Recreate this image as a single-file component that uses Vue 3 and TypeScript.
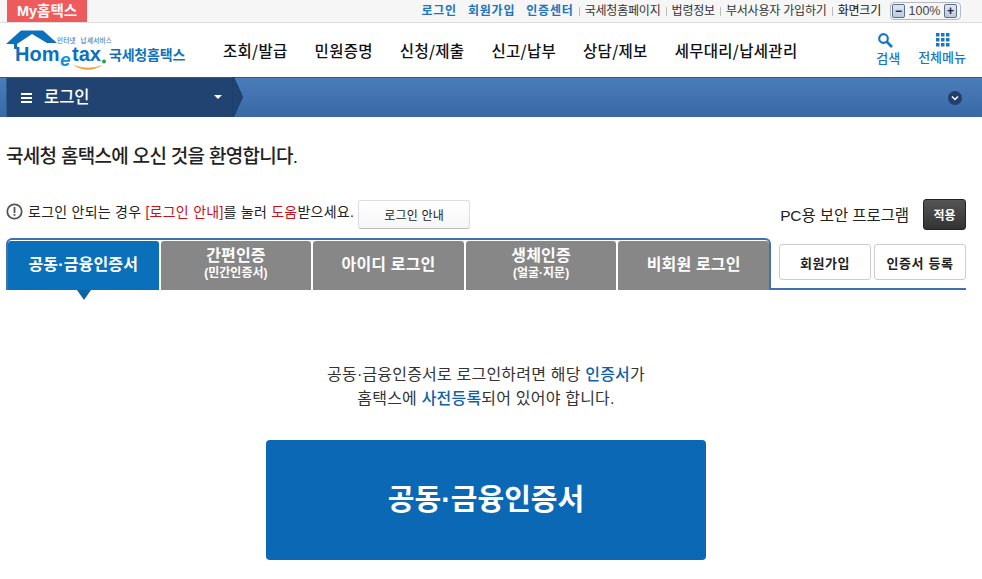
<script setup lang="ts">
const utilStrong: string[] = ['로그인', '회원가입', '인증센터']
const utilLinks: string[] = ['국세청홈페이지', '법령정보', '부서사용자 가입하기']
const navItems: string[] = ['조회/발급', '민원증명', '신청/제출', '신고/납부', '상담/제보', '세무대리/납세관리']
const tabs = [
  { title: '공동·금융인증서', active: true },
  { title: '간편인증', sub: '(민간인증서)' },
  { title: '아이디 로그인' },
  { title: '생체인증', sub: '(얼굴·지문)' },
  { title: '비회원 로그인' },
]
</script>

<template>
  <div class="page">
    <div class="util">
      <div class="my-tab">My홈택스</div>
      <div class="util-right">
        <a v-for="s in utilStrong" :key="s" class="strong">{{ s }}</a>
        <template v-for="l in utilLinks" :key="l">
          <i class="sep"></i><a class="plain">{{ l }}</a>
        </template>
        <i class="sep"></i><span class="size-label">화면크기</span>
        <div class="zoom">
          <span class="zbtn">−</span><span class="zval">100%</span><span class="zbtn">+</span>
        </div>
      </div>
    </div>

    <header class="head">
      <svg class="logo" width="190" height="54" viewBox="0 0 190 54">
        <path d="M6 21 L21 7.500 L43 7.500 L57 20 L47 20 L32 11 L17 21 L17 26 L14 26 L14 21 Z" fill="#0c70bd" />
        <text x="15" y="38" class="logo-home">Hom</text>
        <text x="60" y="43" class="logo-e">e</text>
        <text x="72" y="38" class="logo-tax">tax</text>
        <circle cx="104" cy="38.500" r="2" fill="#2f9e44" />
        <path d="M72 41 Q87 52 103 42 Q87 48 72 41 Z" fill="#f0a030" />
        <text x="57" y="20" class="logo-small">인터넷 납세서비스</text>
        <text x="109" y="37" class="logo-kr">국세청홈택스</text>
      </svg>
      <nav class="main-nav">
        <a v-for="n in navItems" :key="n">{{ n }}</a>
      </nav>
      <div class="head-tools">
        <div class="tool">
          <svg class="icon-search" width="16" height="15" viewBox="0 0 16 15">
            <circle cx="6.500" cy="5.500" r="4.300" fill="none" stroke="#1b76c0" stroke-width="2.200" />
            <path d="M9.500 8.500 L15 14" stroke="#1b76c0" stroke-width="2.600" />
          </svg>
          <span>검색</span>
        </div>
        <div class="tool">
          <svg class="icon-grid" width="14" height="14" viewBox="0 0 14 14">
            <g fill="#1b76c0">
              <rect x="0" y="0" width="3.500" height="3.500" /><rect x="5" y="0" width="3.500" height="3.500" /><rect x="10" y="0" width="3.500" height="3.500" />
              <rect x="0" y="5" width="3.500" height="3.500" /><rect x="5" y="5" width="3.500" height="3.500" /><rect x="10" y="5" width="3.500" height="3.500" />
              <rect x="0" y="10" width="3.500" height="3.500" /><rect x="5" y="10" width="3.500" height="3.500" /><rect x="10" y="10" width="3.500" height="3.500" />
            </g>
          </svg>
          <span>전체메뉴</span>
        </div>
      </div>
    </header>

    <div class="crumb">
      <div class="crumb-login">
        <span class="burger"><i></i><i></i><i></i></span>
        <span class="crumb-text">로그인</span>
        <span class="caret"></span>
        <svg class="crumb-arrow" width="12" height="40" viewBox="0 0 12 40">
          <path d="M0 0 L1.500 0 L10.500 20 L1.500 40 L0 40 Z" fill="#214372" stroke="#183a66" stroke-width="1" />
        </svg>
      </div>
      <span class="crumb-more">
        <svg width="14" height="14" viewBox="0 0 14 14">
          <circle cx="7" cy="7" r="7" fill="#23406a" />
          <path d="M4 5.500 L7 8.500 L10 5.500" fill="none" stroke="#fff" stroke-width="1.500" />
        </svg>
      </span>
    </div>

    <main class="content">
      <h1 class="welcome">국세청 홈택스에 오신 것을 환영합니다.</h1>

      <div class="notice-row">
        <div class="notice">
          <svg class="notice-icon" width="17" height="17" viewBox="0 0 17 17">
            <circle cx="8.500" cy="8.500" r="7.200" fill="none" stroke="#555" stroke-width="1.800" />
            <rect x="7.600" y="4" width="1.800" height="6" fill="#555" />
            <rect x="7.600" y="11" width="1.800" height="1.800" fill="#555" />
          </svg>
          <span class="notice-text">로그인 안되는 경우 <em>[로그인 안내]</em>를 눌러 <em>도움</em>받으세요.</span>
          <button class="guide-btn">로그인 안내</button>
        </div>
        <div class="security">
          <span>PC용 보안 프로그램</span>
          <button class="apply-btn">적용</button>
        </div>
      </div>

      <div class="tab-row">
        <div class="tab-frame">
          <div v-for="t in tabs" :key="t.title" class="tab" :class="{ active: t.active }">
            <span class="tab-title">{{ t.title }}</span>
            <span v-if="t.sub" class="tab-sub">{{ t.sub }}</span>
          </div>
        </div>
        <div class="tab-side">
          <button class="side-btn">회원가입</button>
          <button class="side-btn">인증서 등록</button>
        </div>
      </div>

      <p class="desc">
        공동·금융인증서로 로그인하려면 해당 <b>인증서</b>가<br />
        홈택스에 <b>사전등록</b>되어 있어야 합니다.
      </p>

      <button class="cert-btn">공동·금융인증서</button>
    </main>
  </div>
</template>

<style>
html, body { margin: 0; background: #fff; }
</style>

<style scoped>
.page {
  width: 982px;
  height: 579px;
  overflow: hidden;
  font-family: "Liberation Sans", "Noto Sans CJK KR", sans-serif;
  color: #222;
}
button { font-family: inherit; cursor: pointer; }
.util {
  height: 23px;
  box-sizing: border-box;
  background: #f6f6f6;
  border-bottom: 1px solid #ddd;
  display: flex;
  justify-content: space-between;
  padding-left: 7px;
  padding-right: 21px;
}
.my-tab {
  width: 80px;
  height: 22px;
  background: #ee5b5c;
  color: #fff;
  font-weight: 700;
  font-size: 14.500px;
  line-height: 22px;
  text-align: center;
}
.util-right { display: flex; align-items: center; font-size: 12px; line-height: 22px; white-space: nowrap; }
.strong { color: #1b75bc; font-weight: 700; margin-right: 11px; letter-spacing: 0.800px; }
.plain { color: #333; letter-spacing: -0.200px; }
.sep { width: 1px; height: 9px; background: #bbb; margin: 0 5px; }
.strong + .sep { margin-left: -6px; }
.size-label { color: #111; letter-spacing: -0.200px; }
.zoom {
  margin-left: 9px;
  width: 71px;
  height: 18px;
  box-sizing: border-box;
  border: 1px solid #b5b9c2;
  border-radius: 4px;
  display: flex;
  align-items: center;
  justify-content: space-between;
  padding: 0 3px 0 1px;
}
.zbtn {
  width: 13px;
  height: 14px;
  background: linear-gradient(#dfe8f4, #b8cbe2);
  border: 1px solid #5a6f8f;
  border-radius: 2px;
  font-size: 12px;
  font-weight: 700;
  line-height: 12px;
  text-align: center;
  color: #222;
  box-sizing: border-box;
}
.zval { font-size: 12.500px; color: #444; }
.head { height: 54px; display: flex; align-items: center; position: relative; }
.logo { flex: none; }
.logo-home { font: 700 20px "Liberation Sans", sans-serif; fill: #0c70bd; }
.logo-e { font: 700 italic 19px "Liberation Sans", sans-serif; fill: #1c8fd6; }
.logo-tax { font: 700 20px "Liberation Sans", sans-serif; fill: #0c70bd; }
.logo-small { font: 500 6.500px "Noto Sans CJK KR", sans-serif; fill: #3a84c4; letter-spacing: 0.300px; word-spacing: 3px; }
.logo-kr { font: 700 14px "Noto Sans CJK KR", sans-serif; fill: #1272bb; letter-spacing: -0.200px; }
.main-nav {
  display: flex;
  gap: 27px;
  margin-left: 33px;
  font-family: "Noto Sans CJK KR", sans-serif;
  font-size: 15.500px;
  font-weight: 500;
  color: #111;
  white-space: nowrap;
  letter-spacing: 0.300px;
}
.head-tools { position: absolute; right: 16px; top: 10px; display: flex; gap: 18px; align-items: flex-start; }
.tool {
  display: flex;
  flex-direction: column;
  align-items: center;
  font-size: 13px;
  font-weight: 500;
  color: #1b76c0;
  line-height: 18px;
  gap: 2px;
}
.icon-search { margin-right: 7px; }
.icon-grid { margin-left: 2px; }
.crumb {
  height: 40px;
  background: linear-gradient(#4a7dba, #3a68a6);
  border-top: 1px solid #2f5a92;
  box-sizing: border-box;
  display: flex;
  align-items: center;
  justify-content: space-between;
  padding-left: 6px;
  padding-right: 20px;
}
.crumb-login {
  position: relative;
  width: 227px;
  height: 39px;
  background: #214372;
  border-left: 1px solid #2f5a92;
  box-sizing: border-box;
  display: flex;
  align-items: center;
  color: #fff;
}
.burger { display: flex; flex-direction: column; gap: 2px; margin-left: 14px; width: 11px; }
.burger i { display: block; height: 2px; background: #fff; }
.crumb-text { margin-left: 12px; margin-bottom: 3px; font-size: 16.500px; font-weight: 500; }
.caret {
  position: absolute;
  left: 207px;
  top: 17px;
  border-left: 4px solid transparent;
  border-right: 4px solid transparent;
  border-top: 4px solid #fff;
}
.crumb-arrow { position: absolute; left: 225px; top: -1px; }
.crumb-more { display: flex; }
.content { padding: 0 16px 0 6px; }
.welcome {
  margin: 27px 0 0;
  font-size: 19px;
  line-height: 26px;
  font-weight: 500;
  letter-spacing: -0.700px;
  color: #222;
}
.notice-row {
  display: flex;
  justify-content: space-between;
  align-items: center;
  margin-top: 29px;
  height: 30px;
}
.notice { display: flex; align-items: center; font-size: 14px; color: #222; }
.notice-icon { margin-bottom: 6px; flex: none; }
.notice-text { margin-left: 5px; margin-bottom: 6px; white-space: nowrap; letter-spacing: 0.250px; }
.notice-text em { font-style: normal; color: #c8101a; }
.guide-btn {
  margin-left: 4px;
  width: 112px;
  height: 29px;
  background: linear-gradient(#fff, #f6f6f6);
  border: 1px solid #ddd;
  border-bottom-color: #bbb;
  border-radius: 3px;
  font-size: 12px;
  letter-spacing: 0.200px;
  color: #222;
  padding: 0;
}
.security { display: flex; align-items: center; gap: 14px; font-size: 15.500px; color: #222; letter-spacing: -0.100px; }
.apply-btn {
  width: 43px;
  height: 31px;
  background: linear-gradient(#555, #333);
  border: 1px solid #222;
  border-radius: 3px;
  color: #fff;
  font-size: 12px;
  font-weight: 700;
  padding: 0;
}
.tab-row { display: flex; margin-top: 9px; height: 52px; }
.tab-frame {
  display: flex;
  gap: 2px;
  width: 765px;
  height: 52px;
  box-sizing: border-box;
  border: 2px solid #3f72b0;
  border-bottom: none;
  border-radius: 6px 6px 0 0;
  padding-top: 1px;
}
.tab {
  flex: 1;
  background: #878787;
  border-radius: 3px 3px 0 0;
  color: #fff;
  display: flex;
  flex-direction: column;
  align-items: center;
  justify-content: center;
  position: relative;
  box-sizing: border-box;
  padding-bottom: 3px;
}
.tab.active { background: #0a70b9; }
.tab.active::after {
  content: "";
  position: absolute;
  left: 69px;
  top: 100%;
  border-left: 7px solid transparent;
  border-right: 7px solid transparent;
  border-top: 10px solid #0a65a8;
}
.tab-title { font-size: 16px; font-weight: 700; line-height: 19px; white-space: nowrap; letter-spacing: 0.150px; }
.tab-sub { font-size: 12px; font-weight: 700; line-height: 17px; }
.tab-side {
  flex: 1;
  display: flex;
  justify-content: flex-end;
  gap: 3px;
  border-bottom: 2px solid #3f72b0;
  padding-top: 6px;
  box-sizing: border-box;
  height: 52px;
}
.side-btn {
  width: 92px;
  height: 36px;
  background: #fff;
  border: 1px solid #ccc;
  border-radius: 3px;
  font-size: 13px;
  font-weight: 700;
  color: #222;
  padding: 0;
  letter-spacing: 0.600px;
}
.desc {
  margin: 73px 0 0;
  text-align: center;
  font-size: 16px;
  line-height: 24px;
  letter-spacing: 0.200px;
  color: #333;
}
.desc b { font-weight: 500; color: #0f62a8; }
.cert-btn {
  display: block;
  margin: 29px 0 0 260px;
  width: 440px;
  height: 120px;
  background: #0a68b4;
  border: none;
  border-radius: 4px;
  color: #fff;
  font-size: 29px;
  font-weight: 700;
  padding: 0 0 6px;
}
</style>
